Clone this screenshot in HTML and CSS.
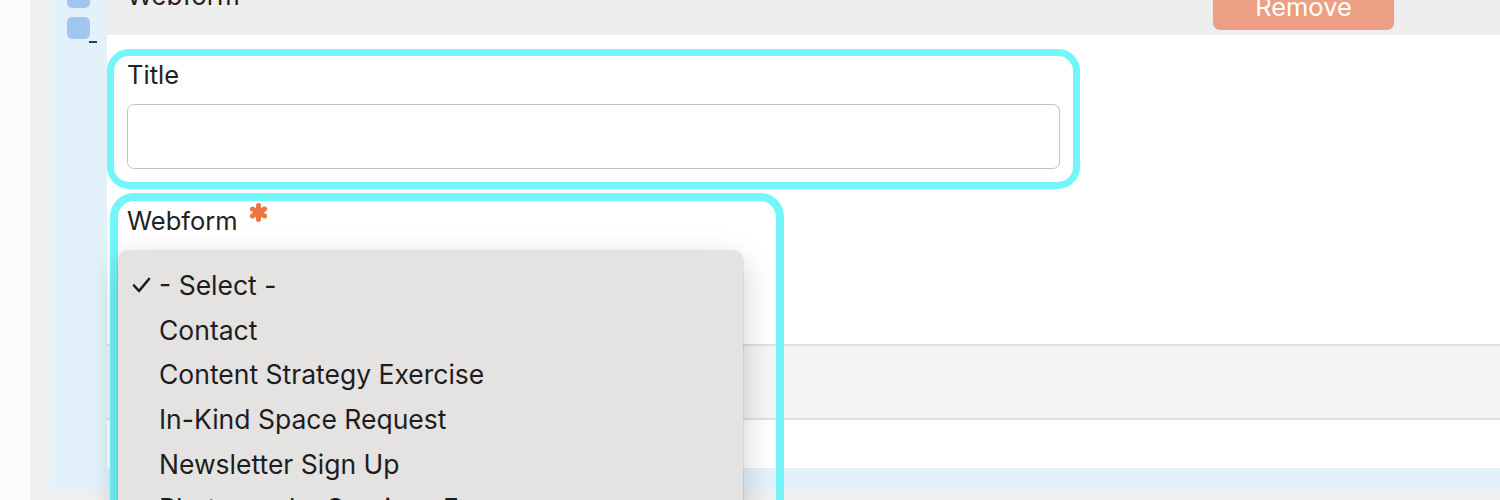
FILE: index.html
```html
<!DOCTYPE html>
<html lang="en">
<head>
<meta charset="utf-8">
<title>Webform paragraph</title>
<link rel="stylesheet" href="styles.css">
</head>
<body>
<div class="page">
  <div class="edge"></div>
  <div class="table">
    <div class="row">
      <div class="handle-cell">
        <span class="sq"></span>
        <span class="sq"></span>
        <span class="dash"></span>
      </div>
      <div class="item">
        <div class="item-head">
          <span class="item-title">Webform</span>
          <button class="remove" type="button">Remove</button>
        </div>
        <div class="item-body">
          <div class="field title-field">
            <label class="label" for="title">Title</label>
            <input class="text-input" id="title" type="text">
          </div>
          <div class="field webform-field">
            <div class="label label-req">
              <span>Webform</span>
              <svg class="asterisk" viewBox="0 0 21 21" aria-hidden="true"><path d="M10.5 3.5V17.5M4.4 7L16.6 14M4.4 14L16.6 7" stroke="#ef7443" stroke-width="5" stroke-linecap="round" fill="none"/></svg>
            </div>
            <ul class="menu">
              <li class="opt selected"><svg class="check" viewBox="0 0 19 16" aria-hidden="true"><path d="M2 8.5L7 14L17 2" stroke="#1d1d1d" stroke-width="2.6" stroke-linecap="round" stroke-linejoin="round" fill="none"/></svg><span>- Select -</span></li>
              <li class="opt"><span class="nocheck"></span><span>Contact</span></li>
              <li class="opt"><span class="nocheck"></span><span>Content Strategy Exercise</span></li>
              <li class="opt"><span class="nocheck"></span><span>In-Kind Space Request</span></li>
              <li class="opt"><span class="nocheck"></span><span>Newsletter Sign Up</span></li>
              <li class="opt"><span class="nocheck"></span><span>Photography Services Form</span></li>
            </ul>
          </div>
          <div class="band"></div>
        </div>
      </div>
    </div>
  </div>
</div>
</body>
</html>
```
FILE: styles.css
```css
*, *::before, *::after { box-sizing: border-box; }
html, body { margin: 0; padding: 0; }
body {
  width: 1500px;
  height: 500px;
  overflow: hidden;
  background: #fbfbfb;
  font-family: Inter, "Noto Sans", sans-serif;
  color: #222;
}
.page { display: flex; height: 500px; overflow: hidden; }
.edge { width: 30px; flex: none; background: #fbfbfb; }
.table { flex: 1; min-width: 0; background: #f0f0f0; padding-left: 20px; }
.row {
  display: flex;
  background: #e3f1fb;
  margin-top: -24px;
  padding-bottom: 22px;
}
.handle-cell {
  width: 57px;
  flex: none;
  padding: 10px 0 0 17px;
  display: flex;
  flex-direction: column;
  align-items: flex-start;
}
.sq { width: 23px; height: 22px; border-radius: 5px; background: #a2c6f0; }
.sq + .sq { margin-top: 9px; }
.dash { width: 8px; height: 2px; background: #2c3d63; margin: 2px 0 0 22px; }
.item { flex: 1; min-width: 0; }
.item-head {
  height: 59px;
  background: #eeeeee;
  display: flex;
  justify-content: space-between;
  align-items: flex-start;
  padding: 3px 106px 0 20px;
}
.item-title { font-size: 26px; line-height: 34px; color: #222; }
.remove {
  margin-top: 5px;
  width: 181px;
  height: 46px;
  border: 0;
  border-radius: 7px;
  background: #ec9f82;
  color: #fff;
  font-family: Inter, "Noto Sans", sans-serif;
  font-size: 25.5px;
  line-height: 46px;
  padding: 0;
}
.item-body { background: #fff; padding: 14px 0 48px 0; }
.label { display: block; font-size: 25.5px; line-height: 34px; color: #222; }
.title-field {
  width: 973px;
  border: 7px solid #72f6fa;
  border-radius: 22px;
  padding: 2px 13px 13px 13px;
}
.text-input {
  display: block;
  width: 100%;
  height: 65px;
  margin: 12px 0 0 0;
  border: 1.5px solid #c3c3c3;
  border-radius: 7px;
  background: #fff;
  outline: none;
}
.webform-field {
  position: relative;
  margin: 4px 0 0 3px;
  width: 674px;
  height: 151px;
  padding: 11px 17px 0;
}
.webform-field::before {
  content: "";
  position: absolute;
  left: 0;
  top: 0;
  width: 674px;
  height: 380px;
  border: 8px solid #72f6fa;
  border-radius: 24px;
  z-index: 2;
  pointer-events: none;
}
.label-req { display: flex; align-items: flex-start; }
.asterisk { width: 21px; height: 21px; margin: -2px 0 0 10px; flex: none; }
.menu {
  position: absolute;
  top: 58px;
  left: 8px;
  width: 625px;
  margin: 0;
  padding: 12px 0;
  list-style: none;
  background: #e4e3e1;
  border-radius: 10px;
  box-shadow: 0 0 0 1px rgba(0, 0, 0, 0.07), 0 10px 32px rgba(0, 0, 0, 0.2);
  z-index: 3;
}
.opt {
  display: flex;
  align-items: center;
  height: 44.6px;
  padding-left: 14px;
  font-size: 26.5px;
  color: #1d1d1d;
  white-space: nowrap;
}
.check { width: 19px; height: 16px; margin-right: 8px; flex: none; }
.nocheck { width: 27px; flex: none; }
.band {
  height: 76px;
  border-top: 2px solid #dfdfdf;
  border-bottom: 2px solid #dfdfdf;
  background: #f5f5f5;
}
```
